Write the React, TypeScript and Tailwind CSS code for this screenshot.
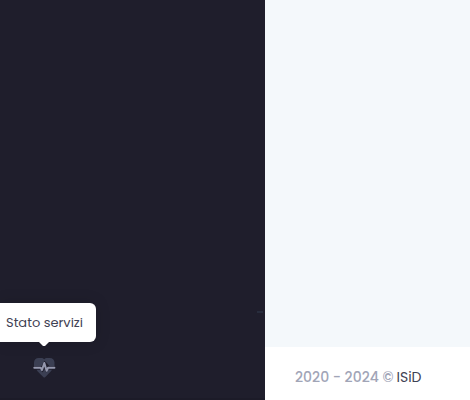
function HeartPulse() {
  return (
    <svg className="h-[22px] w-6" viewBox="0 0 24 22" fill="none" aria-hidden="true">
      <path
        d="M6.500 1h2.800c1.100 0 2 .5 2.900 1.300C13.100 1.500 13.900 1 15 1h2.800C20.500 1 22.500 3 22.500 5.500v3.800h-4.800L14.800 6 12.500 3.800 9.300 9.300H2V5.500C2 3 4 1 6.500 1Z"
        fill="#3b3f53"
      />
      <path
        d="M4.500 12.800h4l2.300 2.700 1.600-3.500 1.700 3.500 2.400-2.700H20c-1.200 2.200-3.200 3.700-4.700 5.200l-2.200 2.200c-.5.500-1.100.5-1.600 0L9.200 18c-1.500-1.500-3.500-3-4.700-5.200Z"
        fill="#3b3f53"
      />
      <path
        d="M2.300 10.800h6.400l1.300 2.200L12.300 6l2.300 7.800 1.500-3h6.300"
        stroke="#9598ae"
        strokeWidth="2"
        strokeLinecap="round"
        strokeLinejoin="round"
      />
    </svg>
  );
}

function Sidebar() {
  return (
    <aside className="flex w-[265px] shrink-0 flex-col justify-end border-b-2 border-[#1c1b28] bg-[#1f1e2c]">
      <div className="mb-[-10px] flex justify-end pr-0.5">
        <span className="h-[2px] w-[6px] bg-[#282d3d]" />
      </div>
      <div className="relative flex h-[39px] w-24 items-center rounded-r-[6px] bg-white pl-[6px] shadow-[0_0_15px_rgba(0,0,0,0.15)]">
        <span className="whitespace-nowrap text-[13px] leading-5 text-[#3f4254]">Stato servizi</span>
        <span className="absolute left-[39px] top-[39px] h-1 w-[10px] bg-white [clip-path:polygon(0_0,100%_0,60%_100%,40%_100%)]" />
      </div>
      <div className="mb-[19px] ml-8 mt-[15px]">
        <HeartPulse />
      </div>
    </aside>
  );
}

export default function App() {
  return (
    <div className="flex h-[400px] w-[470px] overflow-hidden font-['Poppins','Inter',sans-serif]">
      <Sidebar />
      <div className="flex flex-1 flex-col">
        <main className="flex-1 bg-[#f4f8fb]" />
        <footer className="flex h-[53px] items-center bg-white pl-[30px] pt-[7px] text-[14px] leading-5">
          <span className="w-[87.500px] whitespace-nowrap font-medium text-[#a1a5b7]">2020 - 2024</span>
          <span className="w-[14px] font-medium text-[#a1a5b7]">©</span>
          <span className="whitespace-nowrap text-[#3f4254]">ISiD</span>
        </footer>
      </div>
    </div>
  );
}
